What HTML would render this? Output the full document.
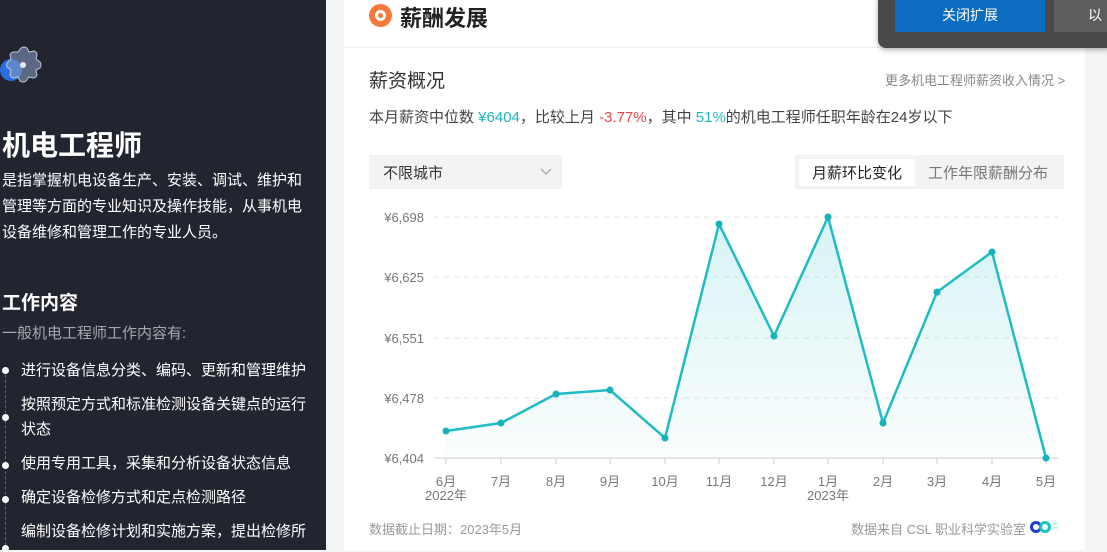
<!DOCTYPE html>
<html><head><meta charset="utf-8"><style>
*{margin:0;padding:0;box-sizing:border-box}
body{width:1107px;height:550px;overflow:hidden;background:#f4f5f7;font-family:"Liberation Sans","Noto Sans CJK SC",sans-serif;position:relative}
.side{position:absolute;left:0;top:0;width:326px;height:550px;background:#22252f;color:#fff}
.card{position:absolute;left:344px;top:0;width:741px;height:550px;background:#fff}
.abs{position:absolute;white-space:nowrap}
</style></head><body>
<div class="side">
  <svg class="abs" style="left:0;top:44px" width="44" height="42" viewBox="0 0 44 42">
    <circle cx="11" cy="26" r="11" fill="#2a6fe0"/>
    <path d="M21 4 Q24 2 27 4 L29 8 L34 7 Q37 8 37 11 L36 15 L40 18 Q42 21 40 24 L36 26 L37 31 Q36 34 33 34 L29 33 L26 37 Q23 39 20 37 L18 33 L13 34 Q10 33 10 30 L11 26 L7 23 Q6 20 8 18 L11 15 L10 11 Q11 8 14 8 L18 8 Z" fill="rgba(130,150,190,0.6)" stroke="#c0c8da" stroke-width="1"/>
    <circle cx="23" cy="21" r="3" fill="#e6e8ef"/>
  </svg>
  <div class="abs" style="left:2px;top:124px;font-size:28px;font-weight:bold">机电工程师</div>
  <div class="abs" style="left:2px;top:168px;font-size:15px;line-height:26px;white-space:normal;width:310px">是指掌握机电设备生产、安装、调试、维护和管理等方面的专业知识及操作技能，从事机电设备维修和管理工作的专业人员。</div>
  <div class="abs" style="left:2px;top:288px;font-size:19px;font-weight:bold">工作内容</div>
  <div class="abs" style="left:2px;top:322px;font-size:15px;color:#a5a8b0">一般机电工程师工作内容有:</div>
  <div class="abs" style="left:5px;top:370px;width:0;height:180px;border-left:1px dashed #666"></div>
  <div class="abs" style="left:21px;top:358px;font-size:15px;line-height:25px;white-space:normal;width:295px">
    <div style="margin-bottom:9px">进行设备信息分类、编码、更新和管理维护</div>
    <div style="margin-bottom:9px">按照预定方式和标准检测设备关键点的运行状态</div>
    <div style="margin-bottom:9px">使用专用工具，采集和分析设备状态信息</div>
    <div style="margin-bottom:9px">确定设备检修方式和定点检测路径</div>
    <div>编制设备检修计划和实施方案，提出检修所</div>
  </div>
  <div class="abs" style="left:2px;top:367px;width:7px;height:7px;border-radius:50%;background:#fff"></div>
  <div class="abs" style="left:2px;top:414px;width:7px;height:7px;border-radius:50%;background:#fff"></div>
  <div class="abs" style="left:2px;top:462px;width:7px;height:7px;border-radius:50%;background:#fff"></div>
  <div class="abs" style="left:2px;top:496px;width:7px;height:7px;border-radius:50%;background:#fff"></div>
  <div class="abs" style="left:2px;top:545px;width:7px;height:7px;border-radius:50%;background:#fff"></div>
</div>
<div class="card">
  <div class="abs" style="left:25px;top:4px;width:23px;height:23px;border-radius:50%;background:#f5793a"></div>
  <div class="abs" style="left:31px;top:10px;width:11px;height:11px;border-radius:50%;background:#fff"></div>
  <div class="abs" style="left:34px;top:13px;width:5px;height:5px;border-radius:50%;background:#f5793a"></div>
  <div class="abs" style="left:56px;top:1px;font-size:22px;font-weight:bold;color:#222">薪酬发展</div>
  <div class="abs" style="left:0;top:47px;width:741px;height:1px;background:#eef0f2"></div>
  <div class="abs" style="left:25px;top:66px;font-size:19px;color:#333">薪资概况</div>
  <div class="abs" style="left:541px;top:70px;font-size:13px;color:#888">更多机电工程师薪资收入情况 &gt;</div>
  <div class="abs" style="left:25px;top:106px;font-size:15px;color:#444">本月薪资中位数 <span style="color:#1fb6c2">¥6404</span>，比较上月 <span style="color:#e8474a">-3.77%</span>，其中 <span style="color:#1fb6c2">51%</span>的机电工程师任职年龄在24岁以下</div>
  <div class="abs" style="left:25px;top:155px;width:193px;height:34px;background:#f2f3f5;font-size:15px;color:#333;padding:7px 14px">不限城市<svg style="position:absolute;right:10px;top:13px" width="12" height="8"><path d="M1 1 L6 6 L11 1" fill="none" stroke="#aaa" stroke-width="1.3"/></svg></div>
  <div class="abs" style="left:451px;top:155px;width:269px;height:34px;background:#f2f3f5"></div>
  <div class="abs" style="left:455px;top:159px;width:116px;height:27px;background:#fff"></div>
  <div class="abs" style="left:468px;top:162px;font-size:15px;color:#222">月薪环比变化</div>
  <div class="abs" style="left:584px;top:162px;font-size:15px;color:#777">工作年限薪酬分布</div>
  <div class="abs" style="left:25px;top:519px;font-size:13px;color:#999">数据截止日期：2023年5月</div>
  <div class="abs" style="left:507px;top:519px;font-size:13px;color:#999">数据来自 CSL 职业科学实验室</div>
  <svg class="abs" style="left:686px;top:520px" width="36" height="14"><circle cx="6" cy="7" r="4.5" fill="none" stroke="#1b3fd1" stroke-width="3"/><circle cx="15" cy="7" r="4.5" fill="none" stroke="#18c3c8" stroke-width="3"/><rect x="23" y="3" width="4" height="1.5" fill="#8fd"/><rect x="23" y="7" width="5" height="1.5" fill="#8fd"/></svg>
</div>
<svg class="abs" style="left:0;top:0" width="1107" height="550">
  <defs><linearGradient id="g" x1="0" y1="0" x2="0" y2="1"><stop offset="0" stop-color="#1fbcc4" stop-opacity="0.18"/><stop offset="1" stop-color="#1fbcc4" stop-opacity="0.02"/></linearGradient></defs>
  <g stroke="#e3e5e8" stroke-dasharray="5 5"><line x1="434" y1="217" x2="1058" y2="217"/><line x1="434" y1="277" x2="1058" y2="277"/><line x1="434" y1="338" x2="1058" y2="338"/><line x1="434" y1="398" x2="1058" y2="398"/></g>
  <line x1="434" y1="458" x2="1058" y2="458" stroke="#ccc"/>
  <g stroke="#ccc"><line x1="446" y1="458" x2="446" y2="464"/><line x1="501" y1="458" x2="501" y2="464"/><line x1="556" y1="458" x2="556" y2="464"/><line x1="610" y1="458" x2="610" y2="464"/><line x1="665" y1="458" x2="665" y2="464"/><line x1="719" y1="458" x2="719" y2="464"/><line x1="774" y1="458" x2="774" y2="464"/><line x1="828" y1="458" x2="828" y2="464"/><line x1="883" y1="458" x2="883" y2="464"/><line x1="937" y1="458" x2="937" y2="464"/><line x1="992" y1="458" x2="992" y2="464"/><line x1="1046" y1="458" x2="1046" y2="464"/></g>
  <g font-family="Liberation Sans,Noto Sans CJK SC,sans-serif" font-size="13" fill="#777" text-anchor="end"><text x="424" y="222">¥6,698</text><text x="424" y="282">¥6,625</text><text x="424" y="343">¥6,551</text><text x="424" y="403">¥6,478</text><text x="424" y="463">¥6,404</text></g>
  <g font-family="Liberation Sans,Noto Sans CJK SC,sans-serif" font-size="13" fill="#777" text-anchor="middle"><text x="446" y="486">6月</text><text x="446" y="500">2022年</text><text x="501" y="486">7月</text><text x="556" y="486">8月</text><text x="610" y="486">9月</text><text x="665" y="486">10月</text><text x="719" y="486">11月</text><text x="774" y="486">12月</text><text x="828" y="486">1月</text><text x="828" y="500">2023年</text><text x="883" y="486">2月</text><text x="937" y="486">3月</text><text x="992" y="486">4月</text><text x="1046" y="486">5月</text></g>
  <path d="M446 431 L501 423 L556 394 L610 390 L665 438 L719 224 L774 336 L828 217 L883 423 L937 292 L992 252 L1046 458 L446 458 Z" fill="url(#g)"/>
  <path d="M446 431 L501 423 L556 394 L610 390 L665 438 L719 224 L774 336 L828 217 L883 423 L937 292 L992 252 L1046 458" fill="none" stroke="#1fbcc4" stroke-width="2.5"/>
  <g fill="#17b3bd"><circle cx="446" cy="431" r="3.5"/><circle cx="501" cy="423" r="3.5"/><circle cx="556" cy="394" r="3.5"/><circle cx="610" cy="390" r="3.5"/><circle cx="665" cy="438" r="3.5"/><circle cx="719" cy="224" r="3.5"/><circle cx="774" cy="336" r="3.5"/><circle cx="828" cy="217" r="3.5"/><circle cx="883" cy="423" r="3.5"/><circle cx="937" cy="292" r="3.5"/><circle cx="992" cy="252" r="3.5"/><circle cx="1046" cy="458" r="3.5"/></g>
</svg>
<div class="abs" style="left:878px;top:-10px;width:240px;height:58px;background:#494949;border-radius:8px;box-shadow:0 2px 6px rgba(0,0,0,.3)"></div>
<div class="abs" style="left:895px;top:0;width:150px;height:32px;background:#0b6cc0;color:#fff;font-size:14px;text-align:center;line-height:30px">关闭扩展</div>
<div class="abs" style="left:1054px;top:0;width:60px;height:32px;background:#5e5e5e;color:#fff;font-size:14px;line-height:30px;padding-left:34px">以</div>
</body></html>
